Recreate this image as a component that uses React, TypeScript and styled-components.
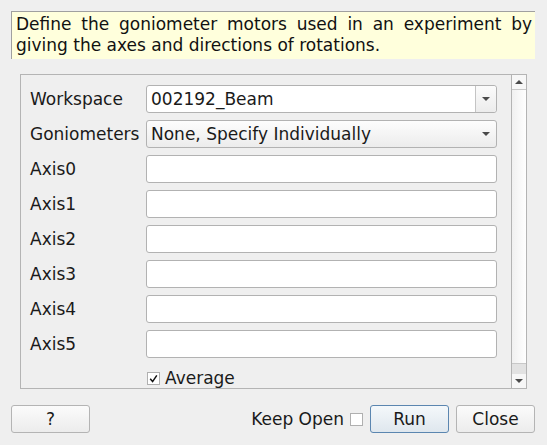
import React from 'react';
import styled, { createGlobalStyle } from 'styled-components';

const GlobalStyle = createGlobalStyle`
  html, body {
    margin: 0;
    padding: 0;
    background: #efefef;
  }
  body {
    font-family: 'DejaVu Sans', 'Liberation Sans', sans-serif;
    font-size: 17px;
    color: #1a1a1a;
  }
`;

const Dialog = styled.div`
  width: 547px;
  height: 445px;
  box-sizing: border-box;
  padding: 11px 12px 0 11px;
  display: flex;
  flex-direction: column;
`;

const Description = styled.div`
  height: 48px;
  box-sizing: border-box;
  background: #ffffdc;
  border-top: 1px solid #a0a0a0;
  border-left: 1px solid #a0a0a0;
  padding: 2px 3px 0 4px;
  font-size: 17px;
  line-height: 21px;
  text-align: justify;
  color: #111;
`;

const ScrollFrame = styled.div`
  margin: 15px 8px 0 9px;
  height: 315px;
  box-sizing: border-box;
  border: 1px solid #b4b4b4;
  display: flex;
`;

const Form = styled.div`
  flex: 1;
  padding: 10px 14px 0 9px;
  display: flex;
  flex-direction: column;
  gap: 7px;
`;

const Row = styled.div`
  display: flex;
  align-items: center;
  height: 28px;
`;

const Label = styled.div`
  width: 116px;
  white-space: nowrap;
`;

const Field = styled.div<{ $combo?: boolean; $editable?: boolean }>`
  flex: 1;
  height: 28px;
  box-sizing: border-box;
  border: 1px solid #b2b2b2;
  border-radius: 3px;
  background: ${(p) =>
    p.$combo && !p.$editable ? 'linear-gradient(#fdfdfd, #ececec)' : '#ffffff'};
  display: flex;
  align-items: center;
  padding-left: 4px;
  white-space: nowrap;
`;

const Value = styled.span`
  flex: 1;
`;

const DropButton = styled.div<{ $split?: boolean }>`
  width: 20px;
  height: 100%;
  display: flex;
  align-items: center;
  justify-content: center;
  border-left: ${(p) => (p.$split ? '1px solid #c4c4c4' : 'none')};
  background: ${(p) => (p.$split ? 'linear-gradient(#fbfbfb, #ececec)' : 'transparent')};
  border-radius: 0 3px 3px 0;
`;

const Arrow = styled.div<{ $up?: boolean }>`
  width: 0;
  height: 0;
  border-left: 4px solid transparent;
  border-right: 4px solid transparent;
  ${(p) =>
    p.$up ? 'border-bottom: 4px solid #4a4a4a;' : 'border-top: 4px solid #4a4a4a;'}
`;

const CheckRow = styled.div`
  display: flex;
  align-items: center;
  padding-left: 116px;
  margin-top: 3px;
  gap: 5px;
`;

const Box = styled.div`
  width: 13px;
  height: 13px;
  box-sizing: border-box;
  border: 1px solid #b0b0b0;
  background: #ffffff;
  display: flex;
  align-items: center;
  justify-content: center;
  margin-left: 1px;
`;

const ScrollBar = styled.div`
  width: 14px;
  border-left: 1px solid #b4b4b4;
  display: flex;
  flex-direction: column;
  background: #e2e2e2;
`;

const ScrollArrow = styled.div`
  height: 14px;
  display: flex;
  align-items: center;
  justify-content: center;
  background: #f7f7f7;
`;

const Handle = styled.div`
  height: 275px;
  box-sizing: border-box;
  border-top: 1px solid #c8c8c8;
  border-bottom: 1px solid #c8c8c8;
  background: linear-gradient(to right, #f0f0f0, #ffffff);
`;

const Track = styled.div`
  flex: 1;
`;

const Footer = styled.div`
  margin-top: 16px;
  display: flex;
  align-items: center;
`;

const Button = styled.button<{ $default?: boolean; $gap?: number }>`
  width: 79px;
  height: 28px;
  box-sizing: border-box;
  font-family: inherit;
  font-size: 17px;
  color: #1a1a1a;
  border-radius: 3px;
  border: 1px solid ${(p) => (p.$default ? '#5b86b0' : '#b4b4b4')};
  background: ${(p) =>
    p.$default ? 'linear-gradient(#f4f8fb, #dfe7ee)' : 'linear-gradient(#fbfbfb, #ececec)'};
  padding: 0;
  margin-left: ${(p) => p.$gap ?? 0}px;
`;

const Spacer = styled.div`
  flex: 1;
`;

const KeepOpen = styled.div`
  display: flex;
  align-items: center;
  gap: 5px;
  margin-right: 7px;
`;

const Tick = () => (
  <svg width="9" height="9" viewBox="0 0 9 9">
    <path d="M1.2 4.8 L3.6 7.6 L7.8 1.4" fill="none" stroke="#111" strokeWidth="1.5" />
  </svg>
);

const axes = ['Axis0', 'Axis1', 'Axis2', 'Axis3', 'Axis4', 'Axis5'];

export default function App() {
  return (
    <>
      <GlobalStyle />
      <Dialog>
        <Description>
          Define the goniometer motors used in an experiment by giving the axes and directions of
          rotations.
        </Description>
        <ScrollFrame>
          <Form>
            <Row>
              <Label>Workspace</Label>
              <Field $combo $editable>
                <Value>002192_Beam</Value>
                <DropButton $split>
                  <Arrow />
                </DropButton>
              </Field>
            </Row>
            <Row>
              <Label>Goniometers</Label>
              <Field $combo>
                <Value>None, Specify Individually</Value>
                <DropButton>
                  <Arrow />
                </DropButton>
              </Field>
            </Row>
            {axes.map((a) => (
              <Row key={a}>
                <Label>{a}</Label>
                <Field />
              </Row>
            ))}
            <CheckRow>
              <Box>
                <Tick />
              </Box>
              <span>Average</span>
            </CheckRow>
          </Form>
          <ScrollBar>
            <ScrollArrow>
              <Arrow $up />
            </ScrollArrow>
            <Handle />
            <Track />
            <ScrollArrow>
              <Arrow />
            </ScrollArrow>
          </ScrollBar>
        </ScrollFrame>
        <Footer>
          <Button>?</Button>
          <Spacer />
          <KeepOpen>
            <span>Keep Open</span>
            <Box />
          </KeepOpen>
          <Button $default>Run</Button>
          <Button $gap={7}>Close</Button>
        </Footer>
      </Dialog>
    </>
  );
}
